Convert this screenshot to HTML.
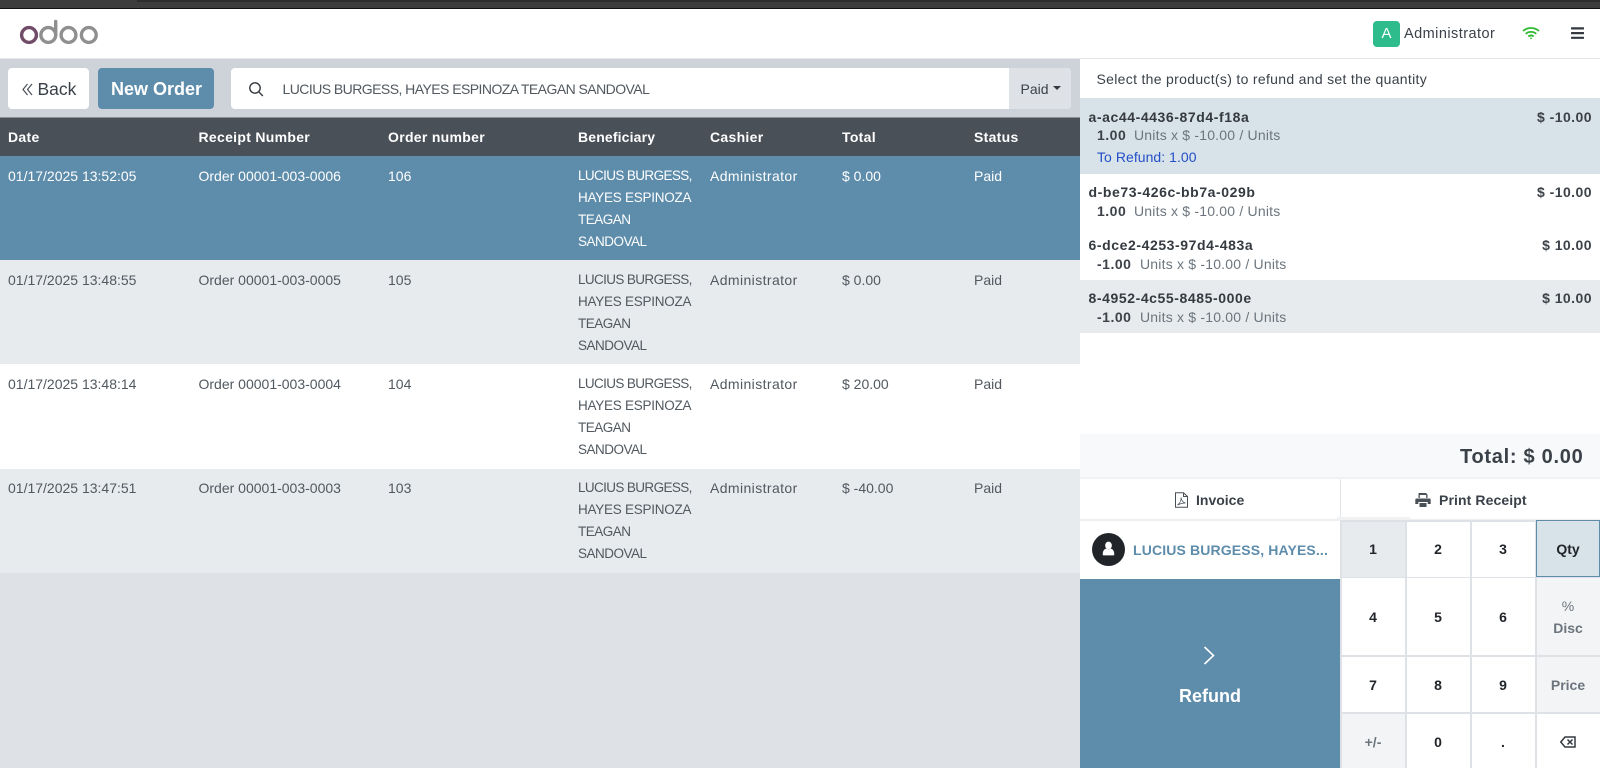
<!DOCTYPE html>
<html><head><meta charset="utf-8"><title>Odoo POS</title>
<style>
html,body{margin:0;padding:0;width:1600px;height:768px;overflow:hidden;background:#fff}
body{position:relative;font-family:"Liberation Sans",sans-serif;font-size:14px;color:#343a40}
.b{position:absolute}
.t{position:absolute;line-height:20px;white-space:nowrap}
.h{font-weight:bold;color:#fff;top:127px;letter-spacing:.3px}
.w{color:#fff}.g{color:#51585f}
.c{letter-spacing:-.5px;font-size:13.5px}
.a{letter-spacing:.4px}
.n{font-weight:bold;color:#343a40;letter-spacing:.58px}
.u{color:#6c757d;letter-spacing:.2px}
.q{font-weight:bold;color:#3c4248;letter-spacing:.5px}
.p{font-weight:bold;letter-spacing:.45px;color:#3c4248;right:8px}
.k{position:absolute;text-align:center;width:64px;line-height:20px;font-weight:bold;color:#212529}
.k.m{color:#6c757d}
svg{position:absolute;display:block}
</style></head><body>
<div class="b" style="left:0;top:0;width:1600px;height:8px;background:#3c3c3c"></div>
<div class="b" style="left:137px;top:0;width:1463px;height:2px;background:#2c2c2c"></div>
<div class="b" style="left:0;top:8px;width:1600px;height:1px;background:#111"></div>
<div class="b" style="left:0;top:58px;width:1600px;height:1px;background:#e4e6e9"></div>

<svg style="left:18px;top:18px" width="82" height="30" viewBox="18 18 82 30" fill="none">
<circle cx="29" cy="35" r="7.4" stroke="#714b67" stroke-width="3.4"/>
<circle cx="48.3" cy="35" r="7.4" stroke="#8f8f8f" stroke-width="3.4"/>
<path d="M55.7 21.5V35" stroke="#8f8f8f" stroke-width="3.4" stroke-linecap="round"/>
<circle cx="68.5" cy="35" r="7.4" stroke="#8f8f8f" stroke-width="3.4"/>
<circle cx="88.8" cy="35" r="7.4" stroke="#8f8f8f" stroke-width="3.4"/>
</svg>

<div class="b" style="left:1373px;top:21px;width:27px;height:26px;border-radius:4px;background:#2ebc8c"></div>
<div class="t w" style="left:1373px;top:24px;width:27px;text-align:center;font-size:15px">A</div>
<div class="t" style="left:1404px;top:24px;font-size:14.5px;letter-spacing:.45px;color:#3b4149">Administrator</div>
<svg style="left:1522px;top:26px" width="18" height="14" viewBox="0 0 18 14" fill="none" stroke="#2db92d" stroke-width="1.8">
<path d="M1 5C5.5 1 12.5 1 17 5"/><path d="M3.7 7.8C6.7 5.2 11.3 5.2 14.3 7.8"/><path d="M6.3 10.5C8 9.2 10 9.2 11.7 10.5"/><circle cx="9" cy="12.4" r=".9" fill="#2db92d" stroke="none"/>
</svg>
<svg style="left:1571px;top:27px" width="13" height="12" viewBox="0 0 13 12" fill="#343a40"><rect width="13" height="2.2" y=".3" rx=".5"/><rect width="13" height="2.2" y="5" rx=".5"/><rect width="13" height="2.2" y="9.7" rx=".5"/></svg>

<!-- left -->
<div class="b" style="left:0;top:59px;width:1080px;height:709px;background:#dee2e6"></div>
<div class="b" style="left:0;top:59px;width:1080px;height:58px;background:#ced3da"></div>
<div class="b" style="left:8px;top:68px;width:81px;height:41px;border-radius:4px;background:#fff"></div>
<svg style="left:22px;top:83px" width="11" height="13" viewBox="0 0 11 13" fill="none" stroke="#4a5058" stroke-width="1.2"><path d="M5.5 1 1 6.5l4.5 5.5"/><path d="M10 1 5.5 6.5 10 12"/></svg>
<div class="t" style="left:37.5px;top:79px;font-size:17.5px;color:#3b4149">Back</div>
<div class="b" style="left:98px;top:68px;width:116px;height:41px;border-radius:4px;background:#5e8cab"></div>
<div class="t w" style="left:111px;top:79px;font-size:18px;font-weight:bold">New Order</div>
<div class="b" style="left:231px;top:68px;width:840px;height:41px;border-radius:4px;background:#fff;overflow:hidden"><div class="b" style="left:778px;top:0;width:62px;height:41px;background:#dee2e6"></div></div>
<svg style="left:248px;top:81px" width="16" height="16" viewBox="0 0 16 16" fill="none" stroke="#343a40" stroke-width="1.4"><circle cx="7" cy="7" r="5.2"/><path d="m10.8 10.8 4 4.2"/></svg>
<div class="t g" style="left:282.5px;top:79px;letter-spacing:-.55px;font-size:14px">LUCIUS BURGESS, HAYES ESPINOZA TEAGAN SANDOVAL</div>
<div class="t" style="left:1020.5px;top:79px;color:#3b4149">Paid</div>
<div class="b" style="left:1053px;top:86px;width:0;height:0;border-left:4.5px solid transparent;border-right:4.5px solid transparent;border-top:4.5px solid #343a40"></div>

<div class="b" style="left:0;top:117px;width:1080px;height:39px;background:#4a5058;border-top:1px solid #8a9097;box-sizing:border-box"></div>
<div class="t h" style="left:8px">Date</div><div class="t h" style="left:198.5px">Receipt Number</div><div class="t h" style="left:388px">Order number</div><div class="t h" style="left:578px;letter-spacing:.15px">Beneficiary</div><div class="t h" style="left:710px">Cashier</div><div class="t h" style="left:842px">Total</div><div class="t h" style="left:974px">Status</div>

<div class="b" style="left:0;top:156px;width:1080px;height:104px;background:#5e8cab"></div>
<div class="b" style="left:0;top:260px;width:1080px;height:104px;background:#e8ebee"></div>
<div class="b" style="left:0;top:364px;width:1080px;height:104.5px;background:#fff"></div>
<div class="b" style="left:0;top:468.5px;width:1080px;height:104px;background:#e8ebee"></div>

<div class="t w" style="left:8px;top:166px">01/17/2025 13:52:05</div><div class="t w" style="left:198.5px;top:166px">Order 00001-003-0006</div><div class="t w" style="left:388px;top:166px">106</div>
<div class="t w c" style="left:578px;top:166px;letter-spacing:-.62px">LUCIUS BURGESS,</div><div class="t w c" style="left:578px;top:188px;letter-spacing:-.25px">HAYES ESPINOZA</div><div class="t w c" style="left:578px;top:210px">TEAGAN</div><div class="t w c" style="left:578px;top:232px">SANDOVAL</div>
<div class="t w a" style="left:710px;top:166px">Administrator</div><div class="t w" style="left:842px;top:166px">$ 0.00</div><div class="t w" style="left:974px;top:166px">Paid</div>

<div class="t g" style="left:8px;top:270px">01/17/2025 13:48:55</div><div class="t g" style="left:198.5px;top:270px">Order 00001-003-0005</div><div class="t g" style="left:388px;top:270px">105</div>
<div class="t g c" style="left:578px;top:270px;letter-spacing:-.62px">LUCIUS BURGESS,</div><div class="t g c" style="left:578px;top:292px;letter-spacing:-.25px">HAYES ESPINOZA</div><div class="t g c" style="left:578px;top:314px">TEAGAN</div><div class="t g c" style="left:578px;top:336px">SANDOVAL</div>
<div class="t g a" style="left:710px;top:270px">Administrator</div><div class="t g" style="left:842px;top:270px">$ 0.00</div><div class="t g" style="left:974px;top:270px">Paid</div>

<div class="t g" style="left:8px;top:374px">01/17/2025 13:48:14</div><div class="t g" style="left:198.5px;top:374px">Order 00001-003-0004</div><div class="t g" style="left:388px;top:374px">104</div>
<div class="t g c" style="left:578px;top:374px;letter-spacing:-.62px">LUCIUS BURGESS,</div><div class="t g c" style="left:578px;top:396px;letter-spacing:-.25px">HAYES ESPINOZA</div><div class="t g c" style="left:578px;top:418px">TEAGAN</div><div class="t g c" style="left:578px;top:440px">SANDOVAL</div>
<div class="t g a" style="left:710px;top:374px">Administrator</div><div class="t g" style="left:842px;top:374px">$ 20.00</div><div class="t g" style="left:974px;top:374px">Paid</div>

<div class="t g" style="left:8px;top:478px">01/17/2025 13:47:51</div><div class="t g" style="left:198.5px;top:478px">Order 00001-003-0003</div><div class="t g" style="left:388px;top:478px">103</div>
<div class="t g c" style="left:578px;top:478px;letter-spacing:-.62px">LUCIUS BURGESS,</div><div class="t g c" style="left:578px;top:500px;letter-spacing:-.25px">HAYES ESPINOZA</div><div class="t g c" style="left:578px;top:522px">TEAGAN</div><div class="t g c" style="left:578px;top:544px">SANDOVAL</div>
<div class="t g a" style="left:710px;top:478px">Administrator</div><div class="t g" style="left:842px;top:478px">$ -40.00</div><div class="t g" style="left:974px;top:478px">Paid</div>

<!-- right -->
<div class="t" style="left:1096.5px;top:69px;letter-spacing:.31px;color:#3b4149">Select the product(s) to refund and set the quantity</div>
<div class="b" style="left:1080px;top:97.5px;width:520px;height:76.5px;background:#d8e2e9"></div>
<div class="b" style="left:1080px;top:280px;width:520px;height:53px;background:#e8ebee"></div>

<div class="t n" style="left:1088.5px;top:107px">a-ac44-4436-87d4-f18a</div><div class="t p" style="top:107px">$ -10.00</div>
<div class="t q" style="left:1097px;top:125px">1.00</div><div class="t u" style="left:1134px;top:125px">Units x $ -10.00 / Units</div>
<div class="t" style="left:1097px;top:147px;color:#2450c8;letter-spacing:.05px">To Refund: 1.00</div>

<div class="t n" style="left:1088.5px;top:182px">d-be73-426c-bb7a-029b</div><div class="t p" style="top:182px">$ -10.00</div>
<div class="t q" style="left:1097px;top:201px">1.00</div><div class="t u" style="left:1134px;top:201px">Units x $ -10.00 / Units</div>

<div class="t n" style="left:1088.5px;top:235px">6-dce2-4253-97d4-483a</div><div class="t p" style="top:235px">$ 10.00</div>
<div class="t q" style="left:1097px;top:254px">-1.00</div><div class="t u" style="left:1140px;top:254px">Units x $ -10.00 / Units</div>

<div class="t n" style="left:1088.5px;top:288px">8-4952-4c55-8485-000e</div><div class="t p" style="top:288px">$ 10.00</div>
<div class="t q" style="left:1097px;top:307px">-1.00</div><div class="t u" style="left:1140px;top:307px">Units x $ -10.00 / Units</div>

<div class="b" style="left:1080px;top:434px;width:520px;height:45px;background:#f8f9fa;border-bottom:2px solid #eff1f3;box-sizing:border-box"></div>
<div class="t" style="right:16.5px;top:447px;font-size:20px;font-weight:bold;letter-spacing:.72px;color:#3b4149">Total: $ 0.00</div>

<div class="b" style="left:1340px;top:479px;width:1px;height:41px;background:#e3e6e9"></div>
<svg style="left:1174px;top:492px" width="15" height="16" viewBox="0 0 15 16" fill="none" stroke="#495057" stroke-width="1"><path d="M1.5.7H9.5L13.5 4.5V15.3H1.5Z"/><path d="M9.5.7V4.5H13.5"/><path d="M3.5 13C6 11 7.5 8 7 5.5C7.5 9 9 10.5 11.5 11C8.5 11 6 11.8 3.5 13Z" stroke-width=".8"/></svg>
<div class="t" style="left:1196px;top:490px;font-weight:bold;color:#3b4149">Invoice</div>
<svg style="left:1415px;top:493px" width="16" height="14" viewBox="0 0 16 14" fill="#495057"><path d="M3.5 0H11L12.5 1.5V5H11.2V2H4.8V5H3.5Z"/><path d="M1.5 5.5H14.5A1.2 1.2 0 0 1 15.7 6.7V11H12.7V9H3.3V11H.3V6.7A1.2 1.2 0 0 1 1.5 5.5Z"/><path d="M4.5 10H11.5V14H4.5Z"/></svg>
<div class="t" style="left:1439px;top:490px;font-weight:bold;color:#3b4149;letter-spacing:.1px">Print Receipt</div>

<!-- partner -->
<div class="b" style="left:1080px;top:519px;width:520px;height:1.5px;background:#eceef0"></div>
<div class="b" style="left:1337px;top:517px;width:73px;height:4px;background:#f0f1f3"></div>
<div class="b" style="left:1092px;top:533px;width:33px;height:33px;border-radius:50%;background:#212529"></div>
<svg style="left:1102px;top:541px" width="13" height="15" viewBox="0 0 17 19" fill="#fff"><ellipse cx="8.5" cy="5.5" rx="4.4" ry="5"/><path d="M3 18.5A1.6 1.6 0 0 1 1 16.4C1 12.5 3.5 10 5.5 9.5C7.2 10.8 9.8 10.8 11.5 9.5C13.5 10 16 12.5 16 16.4A1.6 1.6 0 0 1 14 18.5Z"/></svg>
<div class="t" style="left:1133px;top:540px;font-weight:bold;color:#5e8cab;letter-spacing:.14px">LUCIUS BURGESS, HAYES...</div>

<div class="b" style="left:1080px;top:578.5px;width:260px;height:190px;background:#5e8cab"></div>
<svg style="left:1202px;top:645px" width="15" height="21" viewBox="0 0 15 21" fill="none" stroke="#fff" stroke-width="1.6"><path d="M2.5 2 11.5 10.5 2.5 19"/></svg>
<div class="t w" style="left:1080px;width:260px;text-align:center;top:686px;font-size:18px;font-weight:bold">Refund</div>

<!-- numpad -->
<div class="b" style="left:1341px;top:520px;width:64px;height:57px;background:#e8ebee"></div>
<div class="b" style="left:1536px;top:520px;width:64px;height:57px;background:#d8e2e9;border:1px solid #5e8cab;box-sizing:border-box"></div>
<div class="b" style="left:1536px;top:578px;width:64px;height:135px;background:#f3f4f6"></div>
<div class="b" style="left:1341px;top:714px;width:64px;height:54px;background:#f3f4f6"></div>
<div class="b" style="left:1340px;top:520px;width:260px;height:1.5px;background:#dee2e6"></div>
<div class="b" style="left:1340px;top:576.5px;width:260px;height:1.5px;background:#dee2e6"></div>
<div class="b" style="left:1340px;top:655px;width:260px;height:1.5px;background:#dee2e6"></div>
<div class="b" style="left:1340px;top:712px;width:260px;height:1.5px;background:#dee2e6"></div>
<div class="b" style="left:1340px;top:520px;width:1.5px;height:248px;background:#dee2e6"></div>
<div class="b" style="left:1405px;top:520px;width:1.5px;height:248px;background:#dee2e6"></div>
<div class="b" style="left:1470px;top:520px;width:1.5px;height:248px;background:#dee2e6"></div>
<div class="b" style="left:1535px;top:520px;width:1.5px;height:248px;background:#dee2e6"></div>
<div class="b" style="left:1536px;top:520px;width:64px;height:57px;border:1px solid #5e8cab;box-sizing:border-box"></div>

<div class="k" style="left:1341px;top:539px">1</div><div class="k" style="left:1406px;top:539px">2</div><div class="k" style="left:1471px;top:539px">3</div><div class="k" style="left:1536px;top:539px">Qty</div>
<div class="k" style="left:1341px;top:607px">4</div><div class="k" style="left:1406px;top:607px">5</div><div class="k" style="left:1471px;top:607px">6</div>
<div class="k m" style="left:1536px;top:596px;font-weight:normal">%</div><div class="k m" style="left:1536px;top:618px">Disc</div>
<div class="k" style="left:1341px;top:675px">7</div><div class="k" style="left:1406px;top:675px">8</div><div class="k" style="left:1471px;top:675px">9</div><div class="k m" style="left:1536px;top:675px">Price</div>
<div class="k m" style="left:1341px;top:732px">+/-</div><div class="k" style="left:1406px;top:732px">0</div><div class="k" style="left:1471px;top:732px">.</div>
<svg style="left:1560px;top:736px" width="16" height="12" viewBox="0 0 16 12" fill="none" stroke="#343a40" stroke-width="1.5"><path d="M5 1H15V11H5L.8 6Z"/><path d="m7.5 3.5 5 5M12.5 3.5l-5 5"/></svg>
</body></html>
